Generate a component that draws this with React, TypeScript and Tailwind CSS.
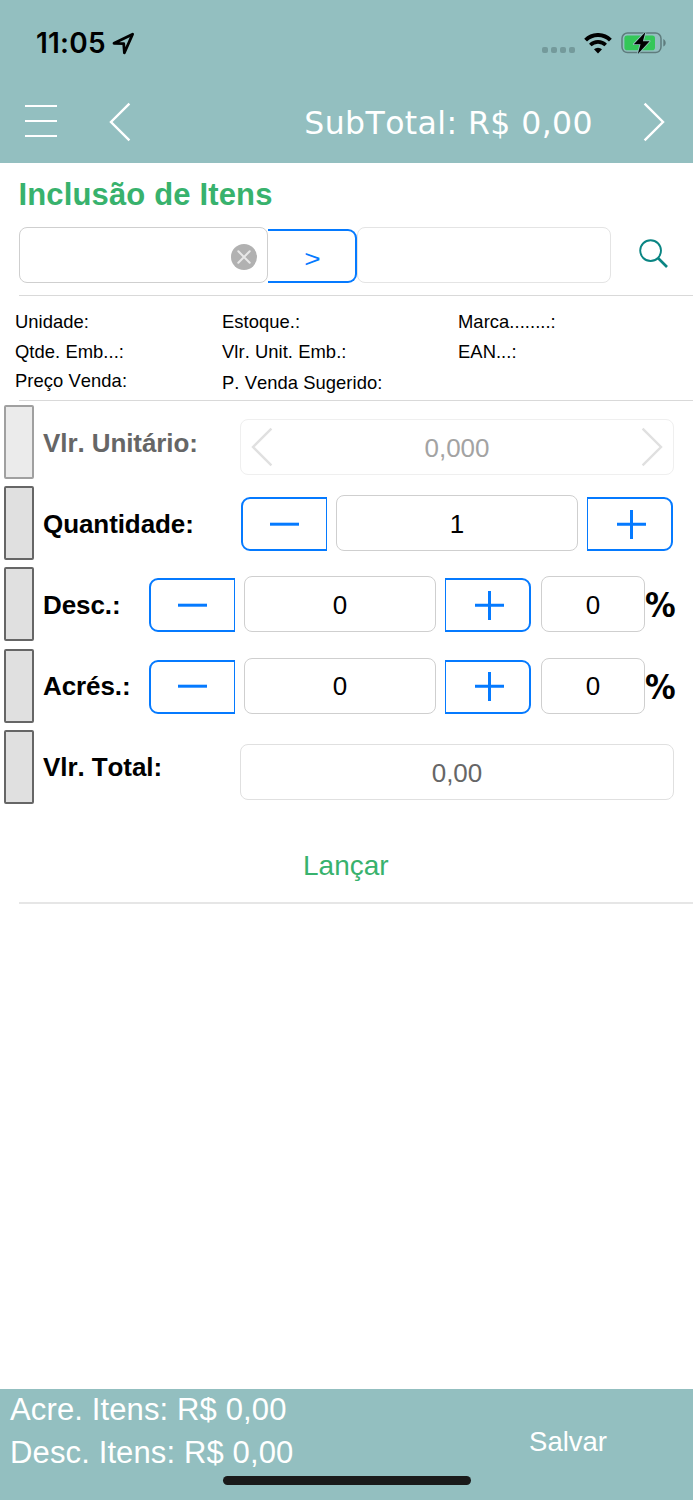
import type { ReactNode } from 'react';

const infoColumns = [
  { width: 'w-[207px]', items: ['Unidade:', 'Qtde. Emb...:', 'Preço Venda:'] },
  { width: 'w-[236px]', items: ['Estoque.:', 'Vlr. Unit. Emb.:', 'P. Venda Sugerido:'] },
  { width: 'w-[200px]', items: ['Marca........:', 'EAN...:'] },
];

function Chevron({ dir, className }: { dir: 'left' | 'right'; className?: string }) {
  return (
    <svg width="22" height="40" viewBox="0 0 22 40" fill="none" stroke="currentColor" strokeWidth="2.4" className={className}>
      <path d={dir === 'left' ? 'M20.4 1.7L2 20l18.4 18.3' : 'M1.6 1.7L20 20L1.6 38.3'} />
    </svg>
  );
}

function StatusBar() {
  return (
    <div className="flex h-[86px] items-center pl-[36px] pr-[26px] text-black">
      <span className="font-[Inter,sans-serif] text-[28px] font-semibold leading-none tracking-[0.2px]">11:05</span>
      <svg width="23" height="23" viewBox="0 0 23 23" fill="none" stroke="currentColor" strokeWidth="2.8" strokeLinejoin="round" className="ml-[6px]">
        <path d="M2 11.3L20.6 2.2L12.4 20.8L11.7 11.7Z" />
      </svg>
      <div className="ml-auto flex items-center">
        {/* No signal dots */}
        <div className="mt-[13px] flex gap-[3px] text-[#749a9b]">
          <i className="h-1.5 w-1.5 rounded-[2px] bg-current" />
          <i className="h-1.5 w-1.5 rounded-[2px] bg-current" />
          <i className="h-1.5 w-1.5 rounded-[2px] bg-current" />
          <i className="h-1.5 w-1.5 rounded-[2px] bg-current" />
        </div>
        <svg width="28" height="21" viewBox="0 0 28 21" fill="none" stroke="currentColor" className="ml-[9px]">
          <path d="M1.6 7.1a17.6 17.6 0 0 1 24.8 0" strokeWidth="4" />
          <path d="M6.3 12a11 11 0 0 1 15.4 0" strokeWidth="3.6" />
          <path d="M14 20.4l-4-4.1a5.7 5.7 0 0 1 8 0z" fill="currentColor" stroke="none" />
        </svg>
        <svg width="46" height="24" viewBox="0 0 46 24" className="ml-[9px]">
          <rect x="1" y="2" width="39" height="19.6" rx="5.5" fill="none" stroke="#5f7c7d" strokeWidth="1.5" />
          <rect x="3.4" y="4.4" width="30.6" height="14.8" rx="2.8" fill="#34c759" />
          <path d="M42.3 8v7.6c3.2-1.6 3.2-6 0-7.6z" fill="#5f7c7d" />
          <path d="M24.4 1L12.8 13.2h6.7L16.8 23L28.6 10.2h-6.7z" fill="#000" stroke="#93bfc0" strokeWidth="1.8" strokeLinejoin="round" paintOrder="stroke" />
        </svg>
      </div>
    </div>
  );
}

function Header() {
  return (
    <header className="h-[163px] shrink-0 bg-[#93bfc0]">
      <StatusBar />
      <div className="flex h-[72px] items-center pl-[25px] pr-[28px] text-white">
        <div className="mb-[2px] flex w-[32px] flex-col gap-[13px]">
          <i className="h-[2px] bg-white" />
          <i className="h-[2px] bg-white" />
          <i className="h-[2px] bg-white" />
        </div>
        <Chevron dir="left" className="ml-[52px]" />
        <span className="ml-auto pt-[3px] font-['DejaVu_Sans',sans-serif] text-[31.5px] leading-none tracking-[0.42px] whitespace-nowrap">
          SubTotal: R$ 0,00
        </span>
        <Chevron dir="right" className="ml-[50px]" />
      </div>
    </header>
  );
}

function SearchRow() {
  return (
    <div className="mt-[15px] flex h-14 items-end pl-[19px]">
      <div className="flex h-14 w-[249px] items-center justify-end rounded-lg border border-[#cfcfcf] pt-[3px] pr-[10px]">
        <svg width="26" height="26" viewBox="0 0 26 26">
          <circle cx="13" cy="13" r="13" fill="#b1b1b1" />
          <path d="M7.3 7.3l11.4 11.4M18.7 7.3L7.3 18.7" stroke="#e8e8e8" strokeWidth="2" strokeLinecap="round" />
        </svg>
      </div>
      <button className="flex h-[54px] w-[89px] items-center justify-center rounded-r-[9px] border-y-2 border-r-2 border-[#057aff] pt-[5px] pl-[2px] text-[28px] leading-none text-[#057aff]">
        <span className="scale-y-[0.85]">&gt;</span>
      </button>
      <div className="h-14 w-[254px] rounded-lg border border-[#e4e4e4]" />
      <svg width="30" height="30" viewBox="0 0 30 30" fill="none" stroke="#0a8583" className="mb-[14px] ml-[28px]">
        <circle cx="11.6" cy="11.6" r="10.4" strokeWidth="1.9" />
        <path d="M19 19l9 9" strokeWidth="2.6" />
      </svg>
    </div>
  );
}

interface RowProps {
  label: string;
  disabled?: boolean;
  children: ReactNode;
}

function Row({ label, disabled, children }: RowProps) {
  return (
    <div className="flex h-[81.2px] items-start pl-1">
      <div className={disabled ? 'h-[74px] w-[30px] shrink-0 rounded-[2px] border-2 border-[#a0a0a0] bg-[#ebebeb]' : 'h-[74px] w-[30px] shrink-0 rounded-[2px] border-2 border-[#666] bg-[#e0e0e0]'} />
      <span className={disabled ? 'ml-[9px] w-0 pt-[23.6px] text-[26px] leading-[28px] font-bold tracking-[-0.08px] whitespace-nowrap text-[#666]' : 'ml-[9px] w-0 pt-[23.6px] text-[26px] leading-[28px] font-bold tracking-[-0.08px] whitespace-nowrap text-black'}>
        {label}
      </span>
      {children}
    </div>
  );
}

function Step({ type }: { type: 'minus' | 'plus' }) {
  const minus = type === 'minus';
  return (
    <button
      className={
        minus
          ? 'mt-[11px] flex h-[54px] w-[86px] items-center justify-center rounded-l-[9px] border-2 border-r border-[#057aff] text-[#057aff]'
          : 'mt-[11px] ml-[9px] flex h-[54px] w-[86px] items-center justify-center rounded-r-[9px] border-2 border-l border-[#057aff] pl-[3px] text-[#057aff]'
      }
    >
      <svg width="29" height="29" viewBox="0 0 29 29" stroke="currentColor" strokeWidth="3">
        <path d={minus ? 'M0 14.2h29' : 'M0 14.2h29M14.5 0v29'} />
      </svg>
    </button>
  );
}

function Field({ value, className }: { value: string; className: string }) {
  return (
    <div className={`mt-[9px] flex h-14 items-center justify-center rounded-lg border border-[#cfcfcf] pt-px text-[26px] leading-none text-black ${className}`}>
      {value}
    </div>
  );
}

function PercentRow({ label }: { label: string }) {
  return (
    <Row label={label}>
      <div className="ml-[106px] flex">
        <Step type="minus" />
        <Field value="0" className="ml-[9px] w-[192px]" />
        <Step type="plus" />
        <Field value="0" className="ml-[10px] w-[104px]" />
        <span className="mt-[18px] origin-left scale-x-[0.9] font-['DejaVu_Sans',sans-serif] text-[34px] leading-[40px] font-bold text-black">%</span>
      </div>
    </Row>
  );
}

export default function App() {
  return (
    <div className="flex h-[1500px] w-[693px] flex-col overflow-hidden bg-white font-['Liberation_Sans',Arial,sans-serif] [font-kerning:none]">
      <Header />

      <main className="flex-1">
        <h1 className="pt-[14px] pl-[18.5px] text-[31px] leading-[35px] font-bold tracking-[0.15px] text-[#38b26d]">Inclusão de Itens</h1>
        <SearchRow />

        {/* Product info */}
        <div className="mt-3 ml-[19px] h-[106px] border-y border-[#d9d9d9]">
          <div className="-ml-1 flex pt-[11px] text-[18.4px] leading-[30px] tracking-[0.05px] text-black">
            {infoColumns.map((col) => (
              <div key={col.items[0]} className={`shrink-0 ${col.width}`}>
                {col.items.map((item) => (
                  <div key={item} className={item.startsWith('P. Venda') ? 'pt-[2px]' : 'h-[29.7px]'}>
                    {item}
                  </div>
                ))}
              </div>
            ))}
          </div>
        </div>

        <div className="mt-1">
          <Row label="Vlr. Unitário:" disabled>
            <div className="mt-[14px] ml-[197px] flex h-14 w-[434px] items-center justify-between rounded-lg border border-[#efefef] px-[10px] text-[#e0e0e0]">
              <Chevron dir="left" />
              <span className="pt-[2px] text-[26px] leading-none text-[#a3a3a3]">0,000</span>
              <Chevron dir="right" />
            </div>
          </Row>
          <Row label="Quantidade:">
            <div className="ml-[198px] flex">
              <Step type="minus" />
              <Field value="1" className="ml-[9px] w-[242px]" />
              <Step type="plus" />
            </div>
          </Row>
          <PercentRow label="Desc.:" />
          <PercentRow label="Acrés.:" />
          <Row label="Vlr. Total:">
            <div className="mt-[14px] ml-[197px] flex h-14 w-[434px] items-center justify-center rounded-lg border border-[#e0e0e0] pt-[3px] text-[26px] leading-none text-[#666]">
              0,00
            </div>
          </Row>
        </div>

        <div className="ml-[19px] flex h-[93px] items-center border-b-2 border-[#e6e6e6] pt-[20px]">
          <button className="ml-[284px] text-[28px] leading-none text-[#38b26d]">Lançar</button>
        </div>
      </main>

      <footer className="relative flex h-[111px] shrink-0 bg-[#93bfc0] text-white">
        <div className="-mt-px pl-[10px] text-[31px] leading-[43px] tracking-[0.13px] whitespace-nowrap">
          <div>Acre. Itens: R$ 0,00</div>
          <div>Desc. Itens: R$ 0,00</div>
        </div>
        <button className="mr-[86px] ml-auto h-[105px] text-[27.5px]">Salvar</button>
        {/* Home indicator */}
        <div className="absolute bottom-[15px] left-[223px] h-[9px] w-[248px] rounded-full bg-[#1a1a1a]" />
      </footer>
    </div>
  );
}
